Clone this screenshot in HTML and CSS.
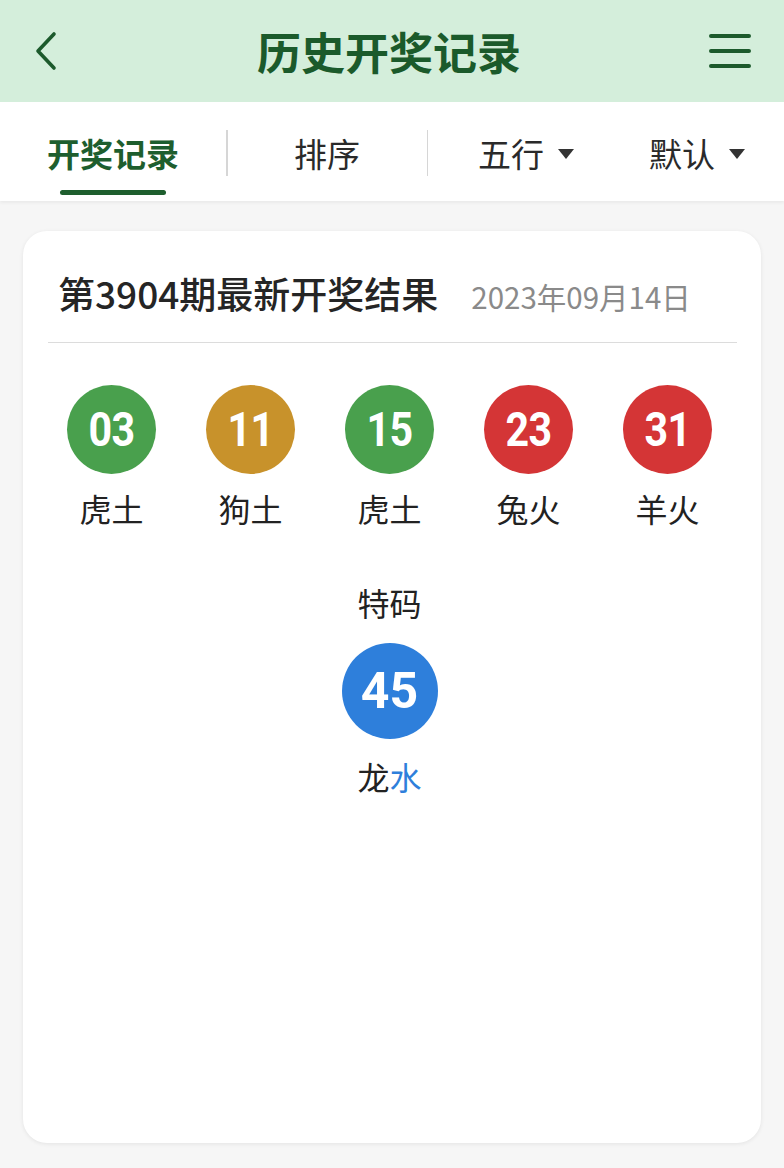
FILE: index.html
```html
<!DOCTYPE html>
<html lang="zh-CN">
<head>
<meta charset="utf-8">
<title>历史开奖记录</title>
<link rel="stylesheet" href="styles.css">
</head>
<body>
<div class="app">
  <header class="topbar">
    <svg class="back" width="30" height="44" viewBox="0 0 30 44">
      <path d="M22 5 L6 22 L22 39" fill="none" stroke="#1c5a2c" stroke-width="3.6" stroke-linecap="round" stroke-linejoin="round"/>
    </svg>
    <h1 class="title">历史开奖记录</h1>
    <svg class="menu" width="44" height="40" viewBox="0 0 44 40">
      <path d="M3 5 H41 M3 20 H41 M3 35 H41" fill="none" stroke="#1c5a2c" stroke-width="4" stroke-linecap="round"/>
    </svg>
  </header>

  <nav class="tabs">
    <div class="tab tab-1 active">
      <span class="tab-text">开奖记录</span>
      <span class="indicator"></span>
    </div>
    <span class="sep"></span>
    <div class="tab tab-2"><span class="tab-text">排序</span></div>
    <span class="sep"></span>
    <div class="tab tab-3"><span class="tab-text">五行<i class="caret"></i></span></div>
    <div class="tab tab-4"><span class="tab-text">默认<i class="caret"></i></span></div>
  </nav>

  <main class="content">
    <section class="card">
      <div class="card-head">
        <span class="issue">第3904期最新开奖结果</span>
        <span class="date">2023年09月14日</span>
      </div>
      <div class="rule"></div>

      <div class="balls">
        <div class="item">
          <div class="ball green"><span class="num">03</span></div>
          <div class="label">虎土</div>
        </div>
        <div class="item">
          <div class="ball gold"><span class="num">11</span></div>
          <div class="label">狗土</div>
        </div>
        <div class="item">
          <div class="ball green"><span class="num">15</span></div>
          <div class="label">虎土</div>
        </div>
        <div class="item">
          <div class="ball red"><span class="num">23</span></div>
          <div class="label">兔火</div>
        </div>
        <div class="item">
          <div class="ball red"><span class="num">31</span></div>
          <div class="label">羊火</div>
        </div>
      </div>

      <div class="special">
        <div class="special-title">特码</div>
        <div class="ball big blue"><span class="num wide">45</span></div>
        <div class="label">龙<span class="water">水</span></div>
      </div>
    </section>
  </main>
</div>
</body>
</html>
```

FILE: styles.css
```css
* { box-sizing: border-box; }
html, body { margin: 0; padding: 0; }
body {
  background: #f6f6f6;
  font-family: "Noto Sans CJK SC", "Noto Sans", sans-serif;
  color: #222;
}
.app { width: 784px; min-height: 1168px; background: #f6f6f6; }

.topbar {
  height: 102px;
  background: #d4eedb;
  display: flex;
  align-items: center;
  justify-content: space-between;
  padding: 0 32px 0 32px;
}
.title {
  margin: 0;
  font-size: 44px;
  font-weight: 700;
  color: #1b5a2b;
  line-height: 1;
  padding-left: 8px;
}

.tabs {
  height: 99px;
  background: #fff;
  display: flex;
  align-items: flex-start;
  padding-top: 28px;
  box-shadow: 0 2px 3px rgba(0,0,0,0.05);
}
.tab {
  display: flex;
  flex-direction: column;
  align-items: center;
}
.tab-1 { width: 226px; }
.tab-2 { width: 199px; }
.tab-3 { width: 196px; }
.tab-4 { width: 146px; }
.tab-text {
  font-size: 33px;
  line-height: 46px;
  color: #2a2a2a;
  display: flex;
  align-items: center;
  white-space: nowrap;
}
.tab.active .tab-text { color: #1e5e2e; font-weight: 700; }
.indicator {
  width: 106px;
  height: 5px;
  border-radius: 3px;
  background: #1e5e2e;
  margin-top: 14px;
}
.sep {
  width: 1.5px;
  height: 46px;
  background: #d6d6d6;
}
.caret {
  display: inline-block;
  width: 0; height: 0;
  border-left: 8px solid transparent;
  border-right: 8px solid transparent;
  border-top: 10px solid #333;
  margin-left: 14px;
  margin-top: 2px;
}

.content { padding: 30px 23px 25px; }
.card {
  background: #fff;
  border-radius: 24px;
  height: 912px;
  box-shadow: 0 1px 4px rgba(0,0,0,0.08);
  padding-top: 37px;
}
.card-head {
  display: flex;
  align-items: baseline;
  padding-left: 35px;
  height: 50px;
  line-height: 50px;
}
.issue { font-size: 37px; font-weight: 500; color: #252525; }
.date { font-size: 29.5px; color: #8a8a8a; margin-left: 33px; }
.rule {
  height: 1px;
  background: #dcdcdc;
  margin: 24px 24px 0 25px;
}

.balls {
  display: grid;
  grid-template-columns: repeat(5, 139px);
  padding-left: 19px;
  margin-top: 42px;
}
.item { display: flex; flex-direction: column; align-items: center; }
.ball {
  width: 89px;
  height: 89px;
  border-radius: 50%;
  display: flex;
  align-items: center;
  justify-content: center;
  color: #fff;
}
.ball.green { background: #49a04d; }
.ball.gold { background: #c8922b; }
.ball.red { background: #d43536; }
.ball.blue { background: #2e7fdb; }
.num {
  font-family: Roboto, "Liberation Sans", sans-serif;
  font-weight: 700;
  font-size: 49px;
  line-height: 1;
  display: inline-block;
  transform: scaleX(0.84);
  letter-spacing: -0.5px;
}
.num.wide { font-size: 50px; transform: none; letter-spacing: 0; }
.label {
  font-size: 32px;
  line-height: 40px;
  margin-top: 14px;
  color: #222;
}

.special {
  width: 695px;
  margin-top: 54px;
  margin-left: 19px;
  display: flex;
  flex-direction: column;
  align-items: center;
}
.special-title { font-size: 32px; line-height: 40px; color: #222; }
.ball.big { width: 96px; height: 96px; margin-top: 21px; }
.special .label { margin-top: 17px; }
.water { color: #2e7fdb; }
```
